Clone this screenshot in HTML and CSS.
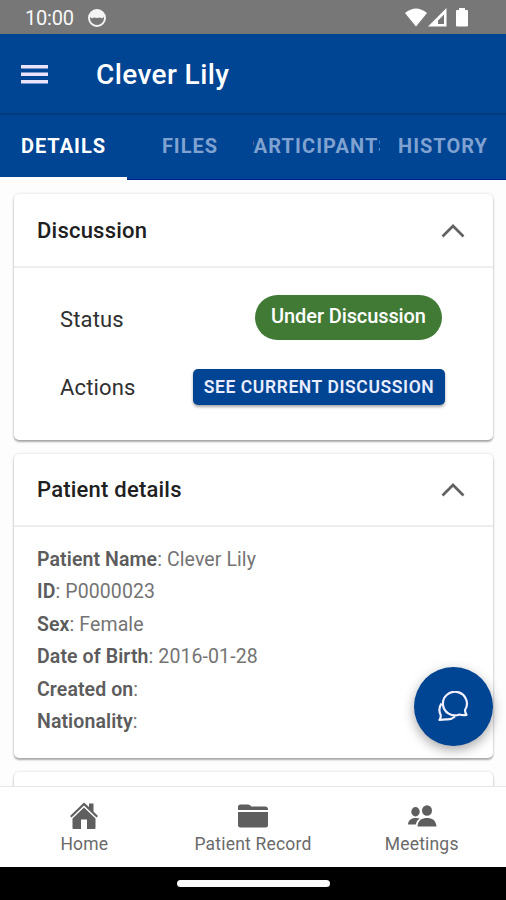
FILE: index.html
```html
<!DOCTYPE html>
<html lang="en">
<head>
<meta charset="utf-8">
<title>Clever Lily</title>
<link rel="stylesheet" href="styles.css">
</head>
<body>
<div class="phone">
  <div class="status">
    <span class="clock">10:00</span>
    <svg class="app-dot" width="20" height="20" viewBox="0 0 20 20"><circle cx="10" cy="10" r="8" fill="none" stroke="#f4f4f4" stroke-width="2"/><path d="M3 8.500a7 7 0 0 1 14 0c-1 2-2.500 2-4 1l-3 .5-3-.5c-1.500 1-3 1-4-1z" fill="#f4f4f4"/></svg>
    <svg class="signals" width="64" height="20" viewBox="0 0 64 20" fill="#fff"><path d="M0 5Q11-4 22 5L11 18.500z"/><path fill-rule="evenodd" d="M23 18.500L41.500 0v18.500zM33 16h6V6.500l-6 6z"/><path d="M52 2h2V0h6v2h2q1 0 1 1v14.500q0 1-1 1H52q-1 0-1-1V3q0-1 1-1z"/></svg>
  </div>
  <header class="appbar">
    <svg class="menu" width="27" height="19" viewBox="0 0 27 19" fill="#e9e4fb"><path d="M0 0h27v3.500H0zM0 7.500h27V11H0zM0 15h27v3.500H0z"/></svg>
    <h1 class="title">Clever Lily</h1>
  </header>
  <nav class="tabs">
    <div class="tab active"><span>DETAILS</span></div>
    <div class="tab"><span>FILES</span></div>
    <div class="tab clipped"><span>PARTICIPANTS</span></div>
    <div class="tab"><span>HISTORY</span></div>
  </nav>
  <main class="content">
    <section class="card discussion">
      <div class="card-head"><h2>Discussion</h2><svg class="chev" width="24" height="14" viewBox="0 0 24 14"><path d="M1.500 12.500L12 2l10.500 10.500" fill="none" stroke="#626262" stroke-width="2.700"/></svg></div>
      <div class="rows">
        <div class="row status-row"><span class="label">Status</span><span class="pill">Under Discussion</span></div>
        <div class="row action-row"><span class="label">Actions</span><button class="action">SEE CURRENT DISCUSSION</button></div>
      </div>
    </section>
    <section class="card patient">
      <div class="card-head"><h2>Patient details</h2><svg class="chev" width="24" height="14" viewBox="0 0 24 14"><path d="M1.500 12.500L12 2l10.500 10.500" fill="none" stroke="#626262" stroke-width="2.700"/></svg></div>
      <div class="facts">
        <div><b>Patient Name</b>: Clever Lily</div>
        <div><b>ID</b>: P0000023</div>
        <div><b>Sex</b>: Female</div>
        <div><b>Date of Birth</b>: 2016-01-28</div>
        <div><b>Created on</b>:</div>
        <div><b>Nationality</b>:</div>
      </div>
    </section>
    <section class="card next"></section>
    <div class="fab"><svg width="32" height="32" viewBox="0 0 32 32" fill="none" stroke="#f2f0ff" stroke-width="2.200" stroke-linejoin="round"><path d="M27 19A12 11.800 0 1 0 21.500 23.500Q25 24.500 28.500 23.800Q27 21.500 27 19z"/><path d="M3.500 12.500Q-.3 18 2.700 24Q3 27 1.500 29Q5 28.500 8 28.300Q13 29 17 25.500"/></svg></div>
  </main>
  <nav class="bottom">
    <div class="item"><svg width="30" height="28" viewBox="0 0 30 28" fill="#5f5f5f"><path d="M1 14L15 .5 20 5V1.500h4.500v8L29 14l-1.500 1.500L15 3.500 2.500 15.500z"/><path d="M15 5.500l11.500 11V26q0 1-1 1H18V17.500h-6V27H4.500q-1 0-1-1V16.500z"/></svg><span>Home</span></div>
    <div class="item record"><svg width="30" height="28" viewBox="0 0 30 28" fill="#5f5f5f"><path d="M0 8V5q0-2.500 2.500-2.500H10q1 0 2 .8L13.500 4.500H27Q30 4.500 30 7.500V8z"/><path d="M0 10h30v13q0 2.500-2.500 2.500h-25Q0 25.500 0 23z"/></svg><span>Patient Record</span></div>
    <div class="item meetings"><svg width="30" height="28" viewBox="0 0 30 28" fill="#5f5f5f"><ellipse cx="8.500" cy="9.700" rx="4.200" ry="4.700"/><ellipse cx="20" cy="8.500" rx="5" ry="5.300"/><path d="M10.500 24.500C11 18 15 16 20 16s9 2 9.500 8.500zM1 22.500C1.300 17.500 5 16 9 16q2 0 3.700.6Q9.300 18.800 8.700 22.500z"/></svg><span>Meetings</span></div>
  </nav>
  <div class="system"><div class="handle"></div></div>
</div>
</body>
</html>
```
FILE: styles.css
```css
* { box-sizing: border-box; }
body { margin: 0; font-family: Roboto, "Liberation Sans", sans-serif; background: #fff; }
h1, h2 { margin: 0; font-weight: 500; }
svg { display: block; flex: none; }
.phone { width: 506px; height: 900px; display: flex; flex-direction: column; overflow: hidden; }
.status { height: 34px; flex: none; background: #777; display: flex; align-items: center; padding: 1px 37px 0 25px; }
.clock { color: #f7f7f7; font-size: 20px; letter-spacing: -.2px; width: 62px; line-height: 34px; }
.signals { margin-left: auto; margin-top: 1px; }
.appbar { height: 81px; flex: none; background: #004494; border-bottom: 2px solid #003b80; display: flex; align-items: center; padding: 1px 0 0 21px; }
.title { margin-left: 48px; color: #fff; font-size: 28px; letter-spacing: .4px; white-space: nowrap; }
.tabs { height: 65px; flex: none; background: #004494; display: grid; grid-template-columns: 127px 126px 127px 126px; }
.tab { color: #7fa2d0; font-size: 20px; font-weight: 700; letter-spacing: 1px; display: flex; justify-content: center; align-items: center; overflow: hidden; white-space: nowrap; padding-bottom: 2px; border-bottom: 1px solid #001e8c; }
.clipped { letter-spacing: 1.100px; }
.active { color: #fff; padding-bottom: 0; border-bottom: 3px solid #fff; }
.content { height: 606px; flex: none; position: relative; overflow: hidden; padding: 14px 13px 0 14px; background: #fdfdfd; }
.card { background: #fff; border-radius: 5px; box-shadow: 0 2px 2px rgba(0,0,0,.30), 0 0 3px rgba(0,0,0,.15); }
.discussion { height: 246px; }
.patient { height: 304px; margin-top: 14px; }
.next { height: 80px; margin-top: 14px; }
.card-head { height: 74px; border-bottom: 2px solid #ededed; display: flex; align-items: center; justify-content: space-between; padding: 1px 28px 0 23px; }
.patient .card-head { height: 73px; padding-top: 0; }
h2 { font-size: 22px; font-weight: 500; letter-spacing: .22px; color: #202020; white-space: nowrap; }
.rows { padding: 27px 48px 0 46px; }
.row { display: flex; align-items: center; justify-content: space-between; }
.status-row { height: 46px; padding-right: 3px; }
.action-row { height: 36px; margin-top: 28px; }
.label { font-size: 22px; color: #303030; letter-spacing: .15px; padding-top: 3px; }
.action-row .label { padding-top: 0; }
.pill { width: 187px; height: 45px; border-radius: 23px; background: #417a35; color: #fff; font-size: 20px; font-weight: 500; letter-spacing: -.1px; text-align: center; line-height: 43px; margin-top: -1px; white-space: nowrap; }
.action { font: 600 17.500px Roboto, sans-serif; letter-spacing: .6px; width: 252px; height: 36px; border: 0; border-radius: 5px; background: #004494; color: #e9edff; padding: 0; white-space: nowrap; box-shadow: 0 2px 3px rgba(0,0,0,.35); }
.facts { padding: 17px 23px; font-size: 19.500px; letter-spacing: .1px; line-height: 32.400px; color: #747474; white-space: nowrap; }
.facts b { font-weight: 600; color: #5c5c5c; }
.fab { position: absolute; left: 414px; top: 487px; width: 79px; height: 79px; border-radius: 50%; background: #004494; box-shadow: 0 4px 12px rgba(0,0,0,.35); display: flex; align-items: center; justify-content: center; }
.bottom { height: 81px; flex: none; background: #fff; border-top: 1px solid #e7e7e7; display: grid; grid-template-columns: repeat(3, 1fr); }
.item { display: flex; flex-direction: column; align-items: center; padding-top: 15px; font-size: 17.500px; color: #6a6a6a; letter-spacing: .2px; }
.item span { margin-top: 4px; line-height: 20px; white-space: nowrap; }
.system { height: 33px; flex: none; background: #000; display: flex; justify-content: center; padding-top: 13px; }
.handle { width: 153px; height: 7px; border-radius: 4px; background: #fafafa; }
```
